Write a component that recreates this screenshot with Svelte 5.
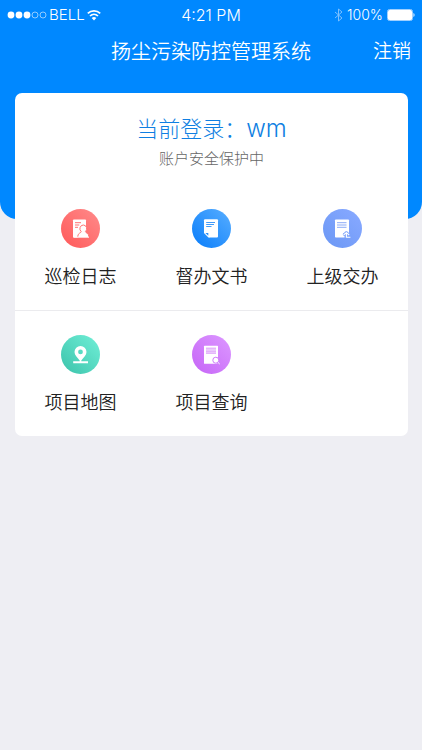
<script lang="ts">
  const user = "wm";

  const items = [
    { icon: "log", label: "巡检日志", from: "#ff6060", to: "#ff8686" },
    { icon: "doc", label: "督办文书", from: "#1484fb", to: "#50a9ff" },
    { icon: "assign", label: "上级交办", from: "#6f9af6", to: "#86a8ff" },
    { icon: "map", label: "项目地图", from: "#43c9b1", to: "#6cebd3" },
    { icon: "search", label: "项目查询", from: "#c96cf8", to: "#da93ff" },
  ];
</script>

<main>
  <header>
    <div class="status">
      <div class="status-left">
        <svg width="40" height="12" viewBox="0 0 40 12">
          {#each [0, 1, 2, 3, 4] as i (i)}
            <circle
              cx={4 + i * 8}
              cy="6"
              r={i < 3 ? 3.4 : 3}
              fill={i < 3 ? "#fff" : "none"}
              stroke={i < 3 ? "none" : "#b5dcff"}
              stroke-width="0.8"
            />
          {/each}
        </svg>
        <span>BELL</span>
        <svg width="14" height="12" viewBox="0 0 14 12" fill="none" stroke="#fff" stroke-width="1.7">
          <path d="M0.8 4.4C4.3 0.9 9.7 0.9 13.2 4.4" />
          <path d="M3 7C5.3 4.8 8.7 4.8 11 7" />
          <path d="M7 11.4 4.7 9C6 7.8 8 7.8 9.3 9Z" fill="#fff" stroke="none" />
        </svg>
      </div>
      <div class="time">4:21 PM</div>
      <div class="status-right">
        <svg width="9" height="14" viewBox="0 0 9 14" fill="none" stroke="#7cc0ff" stroke-width="1">
          <path d="M1 4 8 10 4.5 13V1L8 4 1 10" />
        </svg>
        <span>100%</span>
        <svg width="28" height="12" viewBox="0 0 28 12">
          <rect x="0.5" y="0.5" width="25" height="11" rx="2" fill="none" stroke="#9fd0ff" />
          <rect x="1" y="1" width="24" height="10" rx="1.5" fill="#fff" />
          <path d="M26.4 4C28 4.6 28 7.4 26.4 8Z" fill="#d5ebff" />
        </svg>
      </div>
    </div>
    <nav>
      <h1>扬尘污染防控管理系统</h1>
      <button class="logout">注销</button>
    </nav>
  </header>

  <section class="card">
    <div class="account">
      <h2>当前登录：<span>{user}</span></h2>
      <p>账户安全保护中</p>
    </div>

    <div class="menu">
      {#each items as item (item.icon)}
        <button class="item">
          <svg width="39" height="39" viewBox="0 0 39 39">
            <defs>
              <linearGradient id={`bg-${item.icon}`} x1="0" y1="1" x2="1" y2="0">
                <stop offset="0.15" stop-color={item.from} />
                <stop offset="0.9" stop-color={item.to} />
              </linearGradient>
            </defs>
            <circle cx="19.5" cy="19.5" r="19.5" fill={`url(#bg-${item.icon})`} />
            {#if item.icon === "log"}
              <rect x="12" y="10.5" width="13" height="18" rx="0.8" fill="#fff" />
              <path d="M14 13.7H20M14 16H18.3M14 18.3H17" stroke="#ff7272" stroke-width="1" />
              <path
                d="M22.3 16A3.5 3.7 0 0 1 24.4 22.6C24.4 24 27.8 24 27.8 27.2V28.5H16.8V27.2C16.8 24 20.2 24 20.2 22.6A3.5 3.7 0 0 1 22.3 16Z"
                fill="#fff"
                stroke="#ff7474"
                stroke-width="1"
              />
              <path d="M12.5 28.2H28" stroke="#fff" stroke-width="1" />
            {:else if item.icon === "doc"}
              <path
                d="M13 10.3H25Q26 10.3 26 11.3V27.5Q26 28.5 25 28.5H17L12 23.5V11.3Q12 10.3 13 10.3Z"
                fill="#fff"
              />
              <path d="M14.2 13.5H23M14.2 15.5H22M14.2 17.5H19.5" stroke="#2c90f8" stroke-width="0.9" />
              <path d="M12 23V24L16.5 28.5H17.5V23Z" fill="#fff" />
              <path d="M13.4 23.9H16.3V26.8Z" fill="#2c90f8" />
            {:else if item.icon === "assign"}
              <rect x="12" y="10.5" width="14" height="18" rx="0.8" fill="#fff" />
              <path d="M14 13.7H23.5M14 16H23.5M14 18.3H23.5" stroke="#7fa2f6" stroke-width="0.9" />
              <path d="M21.5 29V27C19.2 26.8 19.4 23.8 21.3 23.8C21.8 21.8 24.8 21.8 25.5 23.8C27.4 24 27.6 26 26.4 27V29Z" fill="#7fa4fb" />
              <path d="M20.6 26 23.4 23.6 26.2 26M23.4 24.2V28.3H27.4" fill="none" stroke="#fff" stroke-width="1.1" />
            {:else if item.icon === "map"}
              <path
                fill-rule="evenodd"
                d="M19.5 11A6 6 0 0 1 25.5 17C25.5 20 22.7 22.4 20.3 25.5V26.3H27V28.2H12.2V26.3H18.7V25.5C16.3 22.4 13.5 20 13.5 17A6 6 0 0 1 19.5 11ZM19.5 14.5A2.4 2.4 0 0 0 19.5 19.3A2.4 2.4 0 0 0 19.5 14.5Z"
                fill="#fff"
              />
            {:else}
              <rect x="12" y="10.8" width="14" height="18" rx="0.6" fill="#fff" />
              <path d="M14 13.2H24M14 15H24M14 16.8H24M14 18.2H24" stroke="#d48af8" stroke-width="0.9" />
              <circle cx="23.8" cy="25.2" r="3" fill="#fff" stroke="#cf7cfb" stroke-width="1" />
              <path d="M24.6 28.8 28.4 28.8 26 26.4Z" fill="#cf7cfb" />
              <path d="M25.8 27.2 27.7 29" stroke="#fff" stroke-width="1" />
            {/if}
          </svg>
          <span>{item.label}</span>
        </button>
      {/each}
    </div>
  </section>
</main>

<style>
  :global(body) {
    margin: 0;
    background-color: #eeeef3;
    font-family: Inter, "Noto Sans CJK SC", sans-serif;
    font-weight: 300;
  }

  header {
    padding-bottom: 145px;
    border-radius: 0 0 17px 17px;
    background-color: #0088ff;
    color: #fff;
  }

  .status {
    display: grid;
    grid-template-columns: 1fr auto 1fr;
    align-items: center;
    height: 30px;
    padding: 0 7px;
    font-size: 15px;
    line-height: 20px;
  }

  .status-left,
  .status-right {
    display: flex;
    align-items: center;
    gap: 2px;
  }

  .status-right {
    justify-content: flex-end;
    gap: 4px;
    font-size: 14px;
  }

  .time {
    font-size: 16px;
  }

  nav {
    display: grid;
    grid-template-columns: 1fr auto 1fr;
    align-items: center;
    height: 44px;
    padding: 0 11px;
  }

  h1 {
    grid-column: 2;
    margin: 0;
    font-size: 20px;
    font-weight: 350;
    line-height: 30px;
  }

  .logout {
    justify-self: end;
    padding: 0;
    border: none;
    background: none;
    color: inherit;
    font-family: inherit;
    font-size: 19px;
    font-weight: 350;
    line-height: 30px;
    cursor: pointer;
  }

  .card {
    margin: -126px 14px 0 15px;
    border-radius: 7px;
    background-color: #fff;
    overflow: hidden;
  }

  .account {
    padding: 20px 0 14px;
    text-align: center;
  }

  h2 {
    margin: 0 0 2px;
    color: #0f7fe2;
    font-size: 22px;
    font-weight: 300;
    line-height: 32px;
  }

  h2 span {
    font-size: 24px;
  }

  p {
    margin: 0;
    color: #666;
    font-size: 15px;
    line-height: 24px;
  }

  .menu {
    display: grid;
    grid-template-columns: repeat(3, 1fr);
  }

  .item {
    display: flex;
    flex-direction: column;
    align-items: center;
    gap: 17px;
    padding: 24px 0 21px;
    border: none;
    background: none;
    color: #222;
    font-family: inherit;
    font-size: 18px;
    font-weight: 350;
    line-height: 24px;
    cursor: pointer;
  }

  .item:nth-child(-n + 3) {
    border-bottom: 1px solid #ebebee;
  }
</style>
